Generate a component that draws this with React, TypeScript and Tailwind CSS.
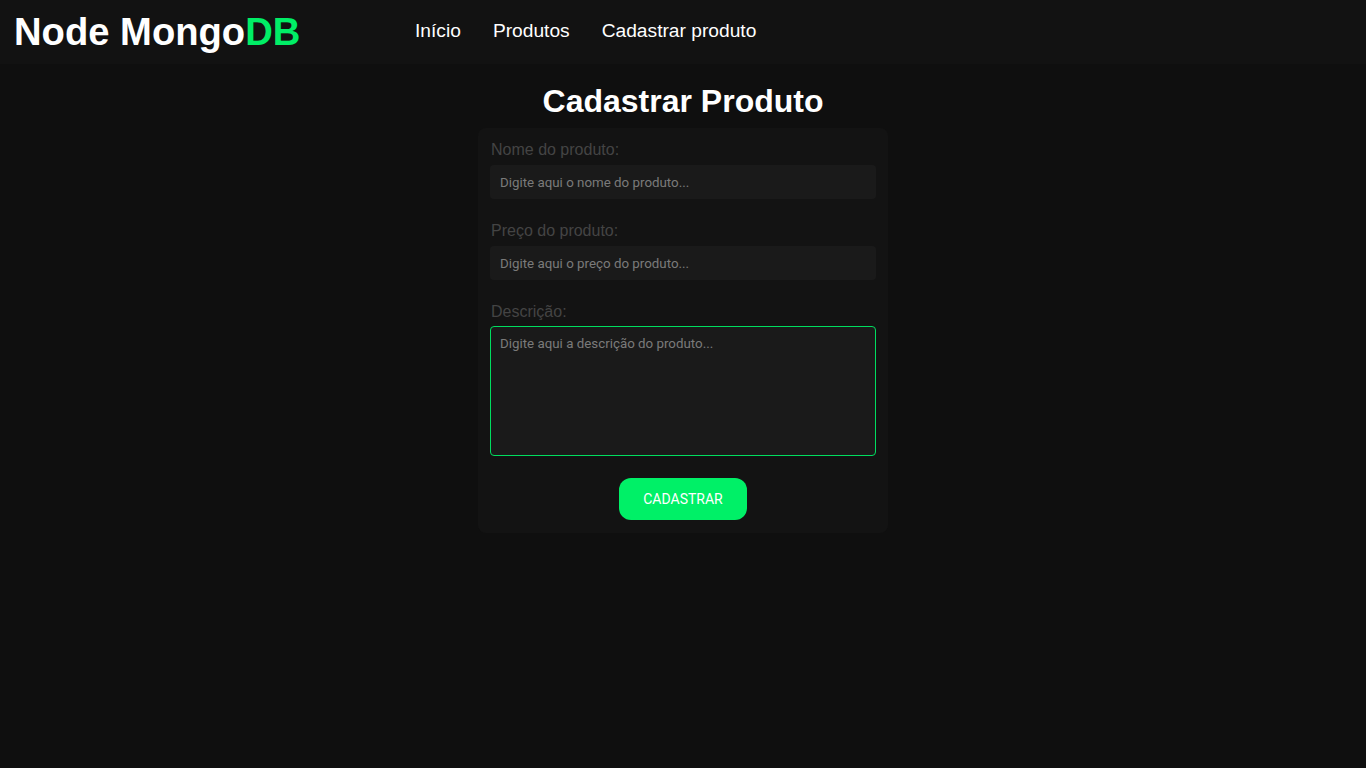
import React from "react";

export default function App() {
  return (
    <div className="min-h-screen w-full bg-[#0f0f0f] font-['Liberation_Sans',Arial,sans-serif] text-white">
      <header className="flex h-16 items-center bg-[#121212] px-[14px]">
        <div className="w-[401px] text-[38.2px] font-bold leading-none">
          Node Mongo<span className="text-[#00ee66]">DB</span>
        </div>
        <nav className="mb-[3px] flex gap-8 text-[19.2px] leading-none">
          <a>Início</a>
          <a>Produtos</a>
          <a>Cadastrar produto</a>
        </nav>
      </header>
      <main className="flex flex-col items-center">
        <h1 className="mt-[19px] text-[32px] font-bold leading-[37px]">Cadastrar Produto</h1>
        <form className="mt-[8px] flex w-[410px] flex-col rounded-lg bg-[#131313] px-3 pb-[13px] pt-[13px]">
          <label className="pl-px text-[16px] leading-[18px] text-[#444444]">Nome do produto:</label>
          <input
            className="mt-[6px] h-[34px] rounded bg-[#1a1a1a] px-[10px] font-['Roboto',sans-serif] text-[13.333px] text-white outline-none placeholder:text-[#7a7a7a]"
            placeholder="Digite aqui o nome do produto..."
          />
          <label className="mt-[23px] pl-px text-[16px] leading-[18px] text-[#444444]">Preço do produto:</label>
          <input
            className="mt-[6px] h-[34px] rounded bg-[#1a1a1a] px-[10px] font-['Roboto',sans-serif] text-[13.333px] text-white outline-none placeholder:text-[#7a7a7a]"
            placeholder="Digite aqui o preço do produto..."
          />
          <label className="mt-[23px] pl-px text-[16px] leading-[18px] text-[#444444]">Descrição:</label>
          <textarea
            className="mt-[5px] h-[130px] resize-none rounded border border-[#00dd5f] bg-[#1a1a1a] px-[9px] py-[9px] font-['Roboto',sans-serif] text-[13.333px] leading-[16px] text-white outline-none placeholder:text-[#7a7a7a]"
            placeholder="Digite aqui a descrição do produto..."
          />
          <div className="mt-[22px] flex justify-center">
            <button
              type="button"
              className="h-[42px] w-[128px] rounded-xl bg-[#00f067] font-['Roboto',sans-serif] text-[14px] text-white"
            >
              CADASTRAR
            </button>
          </div>
        </form>
      </main>
    </div>
  );
}
